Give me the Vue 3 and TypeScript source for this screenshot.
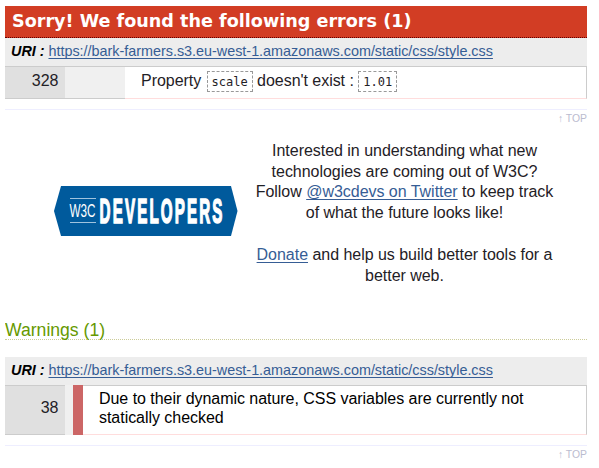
<script setup lang="ts">
interface Report {
  line: number
}

const uri = 'https://bark-farmers.s3.eu-west-1.amazonaws.com/static/css/style.css'
const error: Report = { line: 328 }
const warning: Report = { line: 38 }
</script>

<template>
  <main class="results">
    <section>
      <h3 class="errors-title">Sorry! We found the following errors (1)</h3>
      <h4 class="uri"><em>URI :</em> <a href="#">{{ uri }}</a></h4>
      <div class="row error-row">
        <span class="line">{{ error.line }}</span>
        <span class="context"></span>
        <p class="message">Property <code>scale</code> doesn't exist : <code>1.01</code></p>
      </div>
      <p class="back"><a href="#">↑ TOP</a></p>
    </section>

    <section class="promo">
      <svg class="logo" width="184" height="50" viewBox="0 0 184 50" role="img" aria-label="W3C Developers">
        <path d="M7 0H177L183.500 25L177 50H7L0 25Z" fill="#005a9c" />
        <path d="M16 12.5H42M16 36.5H42" stroke="#9fc3de" stroke-width="1" />
        <text class="w3c" transform="translate(15.500 31.300) scale(.62 1)" textLength="42" lengthAdjust="spacingAndGlyphs">W3C</text>
        <text class="developers" transform="translate(45.6 37.4) scale(.44 1)" textLength="279">DEVELOPERS</text>
      </svg>
      <div class="promo-text">
        <p>Interested in understanding what new<br />technologies are coming out of W3C?<br />Follow <a href="#">@w3cdevs on Twitter</a> to keep track<br />of what the future looks like!</p>
        <p><a href="#">Donate</a> and help us build better tools for a<br />better web.</p>
      </div>
    </section>

    <section>
      <h3 class="warnings-title">Warnings (1)</h3>
      <h4 class="uri"><em>URI :</em> <a href="#">{{ uri }}</a></h4>
      <div class="row warning-row">
        <span class="line">{{ warning.line }}</span>
        <span class="level"></span>
        <p class="message">Due to their dynamic nature, CSS variables are currently not<br />statically checked</p>
      </div>
      <p class="back"><a href="#">↑ TOP</a></p>
    </section>
  </main>
</template>

<style>
body {
  background: #fff;
}
</style>

<style scoped>
.results {
  width: 582px;
  height: 468px;
  box-sizing: border-box;
  margin-left: 5px;
  padding-top: 6px;
  overflow: hidden;
  font: 16px/20px "Liberation Sans", sans-serif;
  color: #1f2126;
}
h3, h4, p { margin: 0; }
a { color: #365d95; }
.errors-title {
  height: 32px;
  box-sizing: border-box;
  padding-left: 7px;
  border-bottom: 1px dotted #600;
  background: #d23d24;
  color: #fff;
  font: bold 17.6px/30px "DejaVu Sans", sans-serif;
  white-space: nowrap;
}
.uri {
  height: 28px;
  padding-left: 6px;
  background: #ededed;
  font-size: 14.4px;
  line-height: 27px;
  font-weight: normal;
  letter-spacing: -0.015px;
  white-space: nowrap;
}
.uri em {
  color: #000;
  font-weight: bold;
}
.uri a, .promo a {
  text-decoration: underline;
  text-decoration-thickness: 1px;
  text-decoration-skip-ink: none;
  text-underline-offset: 2px;
}
.row {
  display: flex;
  box-sizing: border-box;
  border-top: 1px solid #ccc;
}
.error-row { height: 33px; }
.warning-row { height: 50px; }
.line {
  width: 60px;
  box-sizing: border-box;
  padding-right: 6.5px;
  border-bottom: 1px solid #ccc;
  background: #e0e0e0;
  text-align: right;
}
.error-row .line { line-height: 27px; }
.warning-row .line { line-height: 44px; }
.context {
  width: 60px;
  background: #f0f0f0;
  border-bottom: 1px solid #ccc;
}
.level {
  width: 18px;
  box-sizing: border-box;
  margin-top: -1px;
  border-left: 8px solid #f0f0f0;
  background: #c66;
}
.message {
  flex: 1;
  padding-left: 16px;
  border-right: 1px solid #ccc;
  border-bottom: 1px solid #fdd;
  white-space: nowrap;
}
.error-row .message {
  line-height: 27px;
  letter-spacing: -0.04px;
}
.warning-row .message {
  padding-top: 3px;
  color: #000;
  line-height: 19px;
  letter-spacing: -0.04px;
}
code {
  padding: 3px 4px 2px;
  border: 1px dashed #999;
  font: 12px/14px "DejaVu Sans Mono", monospace;
  letter-spacing: 0;
}
.error-row code:first-of-type { margin-left: 1px; }
.back {
  height: 18px;
  margin-top: 10px;
  border-top: 1px solid #eef;
  font-size: 10.4px;
  line-height: 17px;
  text-align: right;
}
.back a {
  color: #bbbccf;
  text-decoration: none;
}
.promo {
  display: flex;
  height: 190px;
  padding-left: 49px;
}
.logo {
  display: block;
  margin-top: 58px;
}
.w3c {
  fill: #fff;
  font: 18.5px "Liberation Sans", sans-serif;
}
.developers {
  fill: #fff;
  stroke: #fff;
  stroke-width: 1.6px;
  font: bold 34.5px "Liberation Sans", sans-serif;
}
.promo-text {
  width: 333px;
  padding-top: 13px;
  line-height: 20.7px;
  letter-spacing: -0.03px;
  text-align: center;
  white-space: nowrap;
}
.promo-text p + p { margin-top: 21.2px; }
.warnings-title {
  height: 22px;
  box-sizing: border-box;
  margin-bottom: 17px;
  border-bottom: 1px dotted #cc9;
  color: #690;
  font-size: 17.6px;
  line-height: 25px;
  font-weight: normal;
}
</style>
